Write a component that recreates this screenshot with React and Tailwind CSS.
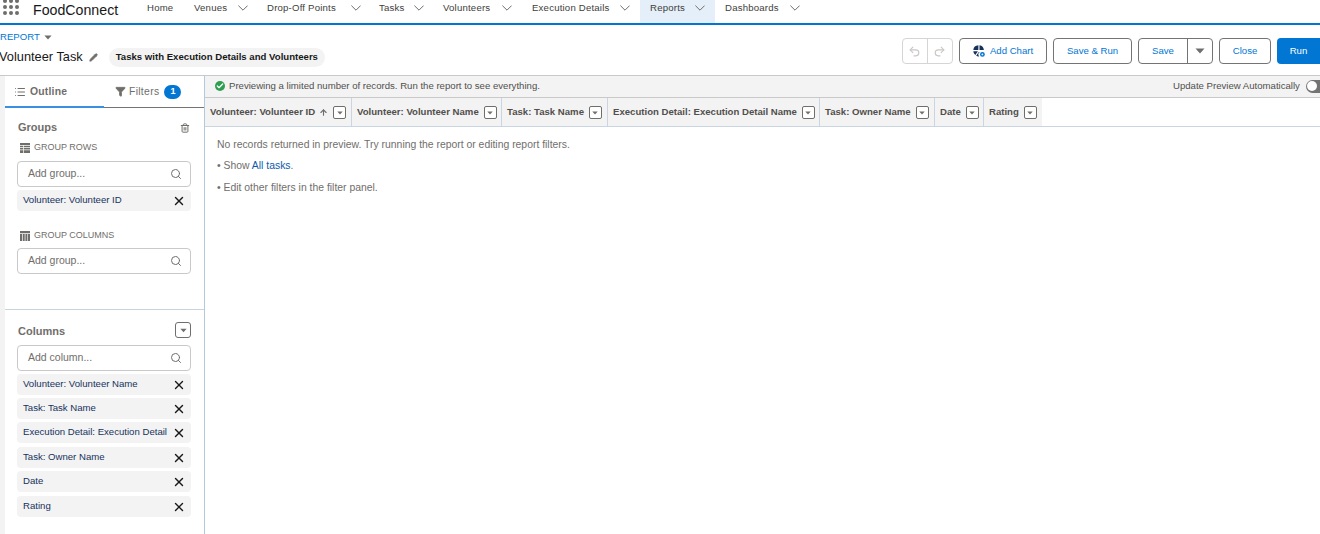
import { Search, X, Pencil, Trash2, Undo2, Redo2, ArrowUp, List, Filter, Check } from 'lucide-react'

const navItems = [
  { title: 'Home', width: 'w-[47px]', pad: 'pr-[19px]' },
  { title: 'Venues', width: 'w-[73px]', pad: 'pr-[19px]', menu: true },
  { title: 'Drop-Off Points', width: 'w-[112px]', pad: 'pr-[18px]', menu: true },
  { title: 'Tasks', width: 'w-[64px]', pad: 'pr-[19px]', menu: true },
  { title: 'Volunteers', width: 'w-[89px]', pad: 'pr-[20px]', menu: true },
  { title: 'Execution Details', width: 'w-[108px]', pad: 'pr-[10px]', menu: true },
]

const tableColumns = [
  { title: 'Volunteer: Volunteer ID', width: 'w-[147px]', sorted: true },
  { title: 'Volunteer: Volunteer Name', width: 'w-[150px]' },
  { title: 'Task: Task Name', width: 'w-[106px]' },
  { title: 'Execution Detail: Execution Detail Name', width: 'w-[212px]' },
  { title: 'Task: Owner Name', width: 'w-[115px]' },
  { title: 'Date', width: 'w-[49px]' },
  { title: 'Rating', width: 'w-[58px]' },
]

const columns = [
  { title: 'Volunteer: Volunteer Name', gap: 'mb-[3px]' },
  { title: 'Task: Task Name', gap: 'mb-[3px]' },
  { title: 'Execution Detail: Execution Detail', gap: 'mb-[4px]' },
  { title: 'Task: Owner Name', gap: 'mb-[3px]' },
  { title: 'Date', gap: 'mb-[4px]' },
  { title: 'Rating', gap: 'mb-0' },
]

function Caret({ className }) {
  return (
    <svg viewBox="0 0 10 6" className={className} fill="currentColor">
      <path d="M0.5 0.5h9L5 5.5z" />
    </svg>
  )
}

function NavChevron() {
  return (
    <svg viewBox="0 0 10 6" className="h-[6px] w-[10px] shrink-0 text-[#706e6b]" fill="none" stroke="currentColor" strokeWidth="1">
      <path d="M0.4 0.6L5 5.2L9.6 0.6" />
    </svg>
  )
}

function FilterBox({ className = '', caret = 'h-[4px] w-[6px]' }) {
  return (
    <span className={`flex h-[13px] w-[13px] shrink-0 items-center justify-center rounded-[2px] border border-[#706e6b] bg-white text-[#706e6b] ${className}`}>
      <Caret className={caret} />
    </span>
  )
}

function SearchInput({ placeholder }) {
  return (
    <div className="flex h-[26px] items-center justify-between rounded-[4px] border border-[#c9c9c9] bg-white pl-[10px] pr-[8px]">
      <span className="text-[10.5px] text-[#706e6b]">{placeholder}</span>
      <Search className="h-[12px] w-[12px] text-[#706e6b]" strokeWidth={2} />
    </div>
  )
}

function Pill({ title, className = '' }) {
  return (
    <div className={`flex h-[21px] items-center justify-between rounded-[4px] bg-[#f3f3f3] pl-[6px] pr-[5px] ${className}`}>
      <span className="whitespace-nowrap text-[9.6px] text-[#16325c]">{title}</span>
      <X className="h-[14px] w-[14px] text-[#181818]" strokeWidth={2.4} />
    </div>
  )
}

function OutlineButton({ children, className = '' }) {
  return (
    <button className={`flex h-[26px] items-center justify-center rounded-[4px] border border-[#747474] bg-white text-[9.6px] text-[#0176d3] ${className}`}>
      {children}
    </button>
  )
}

export default function App() {
  return (
    <div className="flex h-[534px] w-[1320px] flex-col overflow-hidden bg-white font-['Liberation_Sans',Arial,sans-serif]">
      {/* Top nav */}
      <div className="flex h-[25px] shrink-0 border-b-2 border-[#0176d3]">
        <div className="-mt-[1px] grid w-[33px] shrink-0 grid-cols-[4px_4px_4px] content-start gap-[2px] self-start pl-[3px]">
          {Array.from({ length: 9 }).map((_, i) => (
            <span key={i} className="h-[4px] w-[4px] rounded-full bg-[#706e6b]" />
          ))}
        </div>
        <div className="w-[114px] pt-[1px] text-[14.2px] leading-[18px] text-[#181818]">FoodConnect</div>
        {navItems.map((item) => (
          <div key={item.title} className={`flex h-[16px] items-center justify-between ${item.pad} ${item.width}`}>
            <span className="whitespace-nowrap text-[9.6px] tracking-[0.2px] text-[#3e3e3c]">{item.title}</span>
            {item.menu && <NavChevron />}
          </div>
        ))}
        <div className="flex h-[23px] w-[75px] justify-between bg-[#e5eff9] pl-[10px] pr-[10px]">
          <div className="flex h-[16px] w-full items-center justify-between">
            <span className="text-[9.6px] tracking-[0.2px] text-[#3e3e3c]">Reports</span>
            <NavChevron />
          </div>
        </div>
        <div className="ml-[10px] flex h-[16px] w-[75px] items-center justify-between">
          <span className="text-[9.6px] tracking-[0.2px] text-[#3e3e3c]">Dashboards</span>
          <NavChevron />
        </div>
      </div>

      {/* Report header */}
      <div className="flex h-[51px] shrink-0 items-start justify-between border-b border-[#c9c9c9]">
        <div>
          <div className="flex h-[23px] items-center gap-[4px] pt-[1px]">
            <span className="text-[9.6px] text-[#0176d3]">REPORT</span>
            <Caret className="h-[5px] w-[8px] text-[#706e6b]" />
          </div>
          <div className="flex h-[19px] items-center">
            <span className="-ml-[1px] -mt-[2px] text-[12.8px] text-[#181818]">Volunteer Task</span>
            <Pencil className="ml-[6px] h-[9px] w-[9px] text-[#706e6b]" fill="currentColor" />
            <span className="ml-[11px] flex h-[19px] items-center rounded-full bg-[#f3f3f3] px-[7px] text-[9.6px] font-bold text-[#181818]">
              Tasks with Execution Details and Volunteers
            </span>
          </div>
        </div>
        <div className="flex items-center pt-[13px]">
          <div className="flex h-[26px] w-[51px] rounded-[4px] border border-[#d5d5d5] text-[#c9c7c5]">
            <span className="flex w-[25px] items-center justify-center border-r border-[#d5d5d5]">
              <Undo2 className="h-[13px] w-[13px]" />
            </span>
            <span className="flex w-[25px] items-center justify-center">
              <Redo2 className="h-[13px] w-[13px]" />
            </span>
          </div>
          <OutlineButton className="ml-[6px] w-[88px] gap-[5px]">
            <svg viewBox="0 0 12 12" className="h-[12px] w-[12px] text-[#16325c]" fill="currentColor">
              <path d="M5.4 0.2v4.9H0.3A5.4 5.4 0 0 1 5.4 0.2z" />
              <path d="M6.5 0.2A5.4 5.4 0 0 1 10.9 5H6.5z" />
              <path d="M0.3 6.2h4.6l-2.6 3.9A5.4 5.4 0 0 1 0.3 6.2z" />
              <path d="M5.8 7l1 0a3 3 0 0 0-.6 4.4A5.4 5.4 0 0 1 3.2 10.8z" />
              <circle cx="9.4" cy="9.4" r="2.4" fill="#0176d3" />
              <circle cx="9.4" cy="9.4" r="0.9" fill="#fff" />
            </svg>
            Add Chart
          </OutlineButton>
          <OutlineButton className="ml-[6px] w-[79px]">Save &amp; Run</OutlineButton>
          <div className="ml-[6px] flex h-[26px] w-[75px] rounded-[4px] border border-[#747474] text-[9.6px] text-[#0176d3]">
            <span className="flex w-[49px] items-center justify-center border-r border-[#747474]">Save</span>
            <span className="flex flex-1 items-center justify-center text-[#706e6b]">
              <Caret className="h-[6px] w-[10px]" />
            </span>
          </div>
          <OutlineButton className="ml-[6px] w-[52px]">Close</OutlineButton>
          <button className="ml-[6px] flex h-[26px] w-[43px] items-center justify-center rounded-l-[4px] bg-[#0176d3] text-[9.6px] text-white">
            Run
          </button>
        </div>
      </div>

      <div className="flex min-h-0 flex-1">
        {/* Left gutter */}
        <div className="w-[5px] shrink-0 bg-[#f3f3f3]" />

        {/* Side panel */}
        <div className="flex w-[200px] shrink-0 flex-col border-r border-[#b6c9dc]">
          <div className="flex h-[32px] shrink-0 border-b border-[#747474]">
            <div className="-mb-px flex w-[99px] items-center gap-[4px] border-b-2 border-[#3b8fe0] pl-[9px] pt-[1px]">
              <List className="h-[12px] w-[12px] text-[#706e6b]" />
              <span className="text-[10.4px] font-bold tracking-[0.2px] text-[#706e6b]">Outline</span>
            </div>
            <div className="flex flex-1 items-center gap-[3px] pl-[11px]">
              <Filter className="h-[11px] w-[11px] text-[#706e6b]" fill="currentColor" />
              <span className="text-[10.4px] tracking-[0.3px] text-[#706e6b]">Filters</span>
              <span className="ml-[2px] flex h-[14px] w-[17px] items-center justify-center rounded-full bg-[#0176d3] text-[9px] font-bold text-white">1</span>
            </div>
          </div>

          <div className="h-[202px] shrink-0 border-b border-[#c9d3dc] pl-[12px] pr-[13px]">
            <div className="flex h-[28px] items-end justify-between">
              <span className="pl-[1px] text-[11px] font-bold leading-[17px] text-[#706e6b]">Groups</span>
              <Trash2 className="mb-[3px] mr-[1px] h-[10px] w-[10px] text-[#706e6b]" strokeWidth={2.4} />
            </div>
            <div className="flex h-[21px] items-center gap-[4px] pl-[3px] pt-[3px]">
              <svg viewBox="0 0 10 10" className="h-[10px] w-[10px] text-[#706e6b]" fill="currentColor">
                <path d="M0 0h10v2H0zM0 2.7h3v1.6H0zM3.7 2.7H10v1.6H3.7zM0 5h3v1.6H0zM3.7 5H10v1.6H3.7zM0 7.3h3V10H0zM3.7 7.3H10V10H3.7z" />
              </svg>
              <span className="text-[9px] text-[#706e6b]">GROUP ROWS</span>
            </div>
            <div className="mt-[4px]">
              <SearchInput placeholder="Add group..." />
            </div>
            <Pill title="Volunteer: Volunteer ID" className="mt-[3px]" />
            <div className="mt-[16px] flex h-[17px] items-center gap-[4px] pl-[3px]">
              <svg viewBox="0 0 10 10" className="h-[10px] w-[10px] text-[#706e6b]" fill="currentColor">
                <path d="M0 0h10v2.2H0zM0 3h2v7H0zM2.7 3h2v7h-2zM5.4 3h2v7h-2zM8 3h2v7H8z" />
              </svg>
              <span className="text-[9px] text-[#706e6b]">GROUP COLUMNS</span>
            </div>
            <div className="mt-[4px]">
              <SearchInput placeholder="Add group..." />
            </div>
          </div>

          <div className="pl-[12px] pr-[13px]">
            <div className="flex h-[35px] items-end justify-between pb-[7px]">
              <span className="pl-[1px] text-[11px] font-bold leading-[14px] text-[#706e6b]">Columns</span>
              <FilterBox className="h-[16px] w-[16px] rounded-[3px]" caret="h-[5px] w-[7px]" />
            </div>
            <SearchInput placeholder="Add column..." />
            <div className="mt-[3px]">
              {columns.map((col) => (
                <Pill key={col.title} title={col.title} className={col.gap} />
              ))}
            </div>
          </div>
        </div>

        {/* Preview area */}
        <div className="flex min-w-0 flex-1 flex-col">
          <div className="flex h-[22px] shrink-0 items-center justify-between border-b border-[#c9c9c9] bg-[#f3f3f3] pl-[10px]">
            <div className="flex items-center gap-[4px]">
              <span className="flex h-[10px] w-[10px] items-center justify-center rounded-full bg-[#2e9e4f] text-white">
                <Check className="h-[8px] w-[8px]" strokeWidth={4} />
              </span>
              <span className="text-[9.6px] text-[#514f4d]">Previewing a limited number of records. Run the report to see everything.</span>
            </div>
            <div className="flex w-[147px] shrink-0 items-center gap-[6px] overflow-hidden">
              <span className="whitespace-nowrap text-[9.6px] text-[#514f4d]">Update Preview Automatically</span>
              <span className="flex h-[13px] w-[28px] shrink-0 items-center rounded-full bg-[#747474] pl-[1.5px]">
                <span className="h-[10px] w-[10px] rounded-full bg-white" />
              </span>
            </div>
          </div>

          <div className="flex h-[29px] shrink-0 border-b border-[#c9d6e2]">
            {tableColumns.map((col) => (
              <div key={col.title} className={`flex shrink-0 items-center border-r border-[#c9d6e2] bg-[#f3f3f3] pl-[5px] pt-[1px] last:border-r-0 ${col.width}`}>
                <span className="whitespace-nowrap text-[9.6px] font-bold text-[#514f4d]">{col.title}</span>
                {col.sorted && <ArrowUp className="ml-[4px] h-[9px] w-[9px] text-[#706e6b]" strokeWidth={3} />}
                <FilterBox className="ml-[5px]" />
              </div>
            ))}
          </div>

          <div className="pl-[12px] pt-[11px] text-[10.4px] text-[#706e6b]">
            <p className="leading-[13px]">No records returned in preview. Try running the report or editing report filters.</p>
            <p className="mt-[8px] leading-[13px]">
              • Show <a className="text-[#0b5cab]">All tasks</a>.
            </p>
            <p className="mt-[9px] leading-[13px]">• Edit other filters in the filter panel.</p>
          </div>
        </div>
      </div>
    </div>
  )
}
